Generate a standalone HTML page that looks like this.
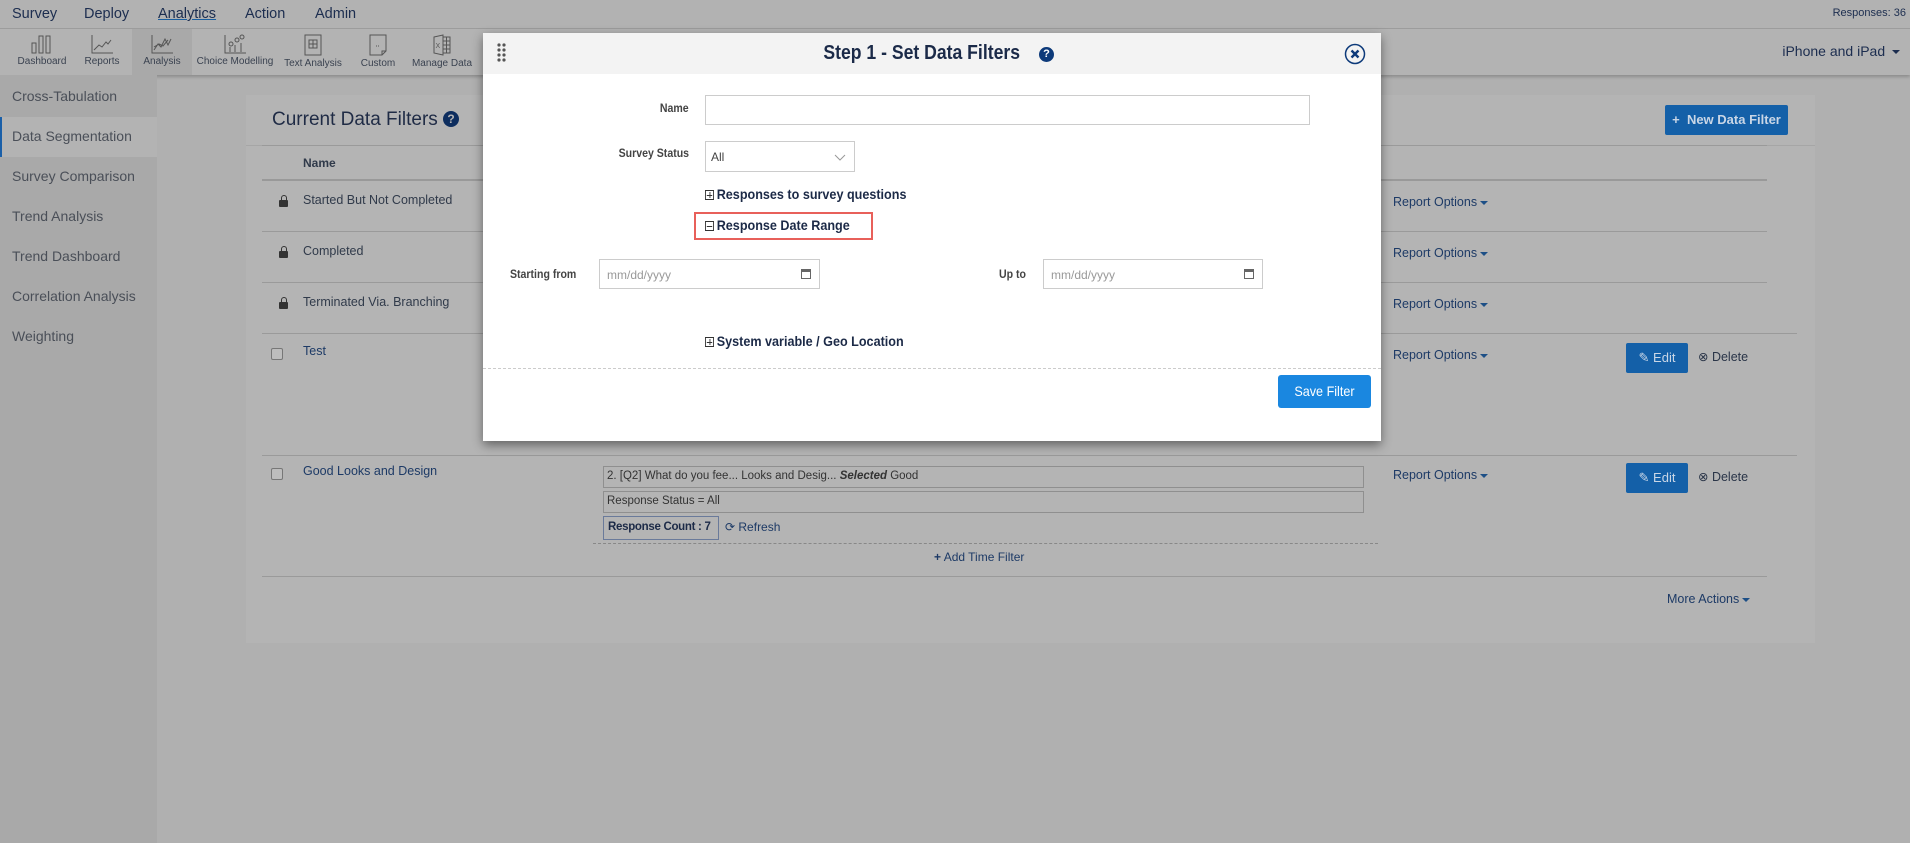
<!DOCTYPE html>
<html><head><meta charset="utf-8"><style>
*{box-sizing:border-box;margin:0;padding:0}
body{width:1910px;height:843px;position:relative;overflow:hidden;background:#b0b0b0;font-family:"Liberation Sans",sans-serif;color:#2a3548}
.a{position:absolute;white-space:nowrap}
.nav{left:0;top:0;width:1910px;height:29px;background:#b2b2b2;border-bottom:1px solid #9d9d9d}
.nav span{position:absolute;top:6px;font-size:14.5px;color:#1c2d4f}
.tb{left:0;top:29px;width:1910px;height:46px;background:#b3b3b3;box-shadow:0 2px 3px rgba(0,0,0,.2)}
.ti{position:absolute;top:0;height:46px;text-align:center;font-size:10px;color:#3a4250}
.ti svg{display:block;margin:5px auto 2px}
.sb{left:0;top:75px;width:157px;height:768px;background:#a9a9a9}
.si{position:absolute;left:0;width:157px;height:40px;font-size:14px;color:#4a4f58;padding:11px 0 0 12px}
.panel{left:246px;top:95px;width:1569px;height:548px;background:#b4b4b4}
.row{position:absolute;left:16px;width:1505px;border-top:1px solid #9a9a9a}
.nm{position:absolute;left:41px;font-size:12.5px;color:#303a4a}
.ro{position:absolute;left:1131px;font-size:12.5px;color:#1d3a66}
.caret{display:inline-block;border-left:4px solid transparent;border-right:4px solid transparent;border-top:4px solid #1d4f86;vertical-align:middle;margin-left:3px}
.lock{position:absolute;left:17px;width:9px;height:7px;background:#333;border-radius:1px}
.lock:before{content:"";position:absolute;left:1.5px;top:-5px;width:6px;height:6px;border:1.5px solid #333;border-bottom:none;border-radius:3px 3px 0 0;box-sizing:border-box}
.cb{position:absolute;left:9px;width:12px;height:12px;border:1px solid #777;border-radius:2px;background:#bdbdbd}
.btn{position:absolute;background:#1460a8;color:#c9d6e6;border-radius:2px;font-size:13px;text-align:center}
.modal{left:483px;top:33px;width:898px;height:408px;background:#fff;box-shadow:0 4px 10px rgba(0,0,0,.45)}
.mh{position:absolute;left:0;top:0;width:898px;height:41px;background:#f3f3f3}
.lbl{position:absolute;font-size:12px;font-weight:bold;color:#444;transform-origin:right center}
.inp{position:absolute;border:1px solid #ccc;background:#fff;font-size:12px;color:#999}
.sec{position:absolute;font-size:14px;font-weight:bold;color:#1c2a47;transform:scaleX(.9);transform-origin:left center}
.pm{display:inline-block;width:10px;height:10px;border:1px solid #333;vertical-align:-1px;margin-right:3px;position:relative}
.pm:before{content:"";position:absolute;left:1px;right:1px;top:3.5px;height:1px;background:#333}
.pm.p:after{content:"";position:absolute;top:1px;bottom:1px;left:3.5px;width:1px;background:#333}
.cal{position:absolute;right:8px;top:9px;width:10px;height:10px;border:1.5px solid #666;border-top-width:3px}
</style></head><body>
<div class="a nav">
<span style="left:12px">Survey</span><span style="left:84px">Deploy</span>
<span style="left:158px;text-decoration:underline;text-decoration-color:#1a5fa0">Analytics</span>
<span style="left:245px">Action</span><span style="left:315px">Admin</span>
<span style="left:auto;right:4px;top:7px;font-size:11px">Responses: 36</span>
</div>
<div class="a tb">
<div class="ti" style="left:10px;width:64px"><svg width="26" height="20" viewBox="0 0 26 20" fill="none" stroke="#555"><rect x="3" y="9" width="4" height="10"/><rect x="10" y="2" width="4" height="17"/><rect x="17" y="2" width="4" height="17"/></svg>Dashboard</div>
<div class="ti" style="left:76px;width:52px"><svg width="26" height="20" viewBox="0 0 26 20" fill="none" stroke="#555"><path d="M3 1v18h21M5 16l5-5 3 2 4-5 2 2 3-4"/></svg>Reports</div>
<div class="ti" style="left:132px;width:60px;background:#a9a9a9"><svg width="26" height="20" viewBox="0 0 26 20" fill="none" stroke="#555"><path d="M3 1v18h21M5 16l4-6 3 3 4-8 3 6 3-6M5 13l5-3 4 2 5-6"/></svg>Analysis</div>
<div class="ti" style="left:195px;width:80px"><svg width="26" height="20" viewBox="0 0 26 20" fill="none" stroke="#555"><path d="M3 1v18h21M8 18v-5M13 18v-7M19 18v-9"/><circle cx="9" cy="10" r="2"/><circle cx="15" cy="6" r="2"/><circle cx="20" cy="3" r="2"/></svg>Choice Modelling</div>
<div class="ti" style="left:280px;width:66px"><svg width="26" height="22" viewBox="0 0 26 22" fill="none" stroke="#555"><rect x="5" y="1" width="16" height="20"/><rect x="9" y="6" width="8" height="8"/><path d="M13 6v8M9 10h8"/></svg>Text Analysis</div>
<div class="ti" style="left:354px;width:48px"><svg width="26" height="22" viewBox="0 0 26 22" fill="none" stroke="#555"><path d="M5 1h16v16l-4 4H5z M17 21v-4h4"/><path d="M11 12h3" stroke-dasharray="1 1"/></svg>Custom</div>
<div class="ti" style="left:410px;width:64px"><svg width="26" height="22" viewBox="0 0 26 22" fill="none" stroke="#555"><path d="M5 3l9-2v20l-9-2z"/><rect x="14" y="3" width="7" height="16"/><path d="M14 7h7M14 11h7M14 15h7M17.5 3v16"/><text x="6.5" y="14" font-size="7" fill="#555" stroke="none" font-family="Liberation Sans">X</text></svg>Manage Data</div>
<span class="a" style="right:10px;top:14px;font-size:14px;color:#1c2d4f">iPhone and iPad <span class="caret" style="border-top-color:#1c2d4f"></span></span>
</div>
<div class="a sb">
<div class="si" style="top:2px">Cross-Tabulation</div>
<div class="si" style="top:42px;background:#b3b3b3;border-left:2px solid #1a5fa8;padding-left:10px">Data Segmentation</div>
<div class="si" style="top:82px">Survey Comparison</div>
<div class="si" style="top:122px">Trend Analysis</div>
<div class="si" style="top:162px">Trend Dashboard</div>
<div class="si" style="top:202px">Correlation Analysis</div>
<div class="si" style="top:242px">Weighting</div>
</div>
<div class="a panel">
<div class="a" style="left:26px;top:14px;font-size:19px;color:#1f2b45">Current Data Filters <span style="display:inline-block;width:16px;height:16px;border-radius:50%;background:#0d2d5e;color:#b4b4b4;font-size:12px;font-weight:bold;text-align:center;line-height:16px;vertical-align:2px">?</span></div>
<div class="btn" style="left:1419px;top:10px;width:123px;height:30px;line-height:30px;font-weight:bold">+&nbsp; New Data Filter</div>
<div class="a" style="left:0;top:50px;width:1569px;border-top:1px solid #a6a6a6"></div>
<div class="row" style="top:50px;height:35px;border-top-color:#9a9a9a"><div class="nm" style="top:10px;font-weight:bold;font-size:12px">Name</div></div>
<div class="row" style="top:84px;border-top:2px solid #999;height:52px"><div class="lock" style="top:19px"></div><div class="nm" style="top:12px">Started But Not Completed</div><div class="ro" style="top:14px">Report Options<span class="caret"></span></div></div>
<div class="row" style="top:136px;height:51px"><div class="lock" style="top:19px"></div><div class="nm" style="top:12px">Completed</div><div class="ro" style="top:14px">Report Options<span class="caret"></span></div></div>
<div class="row" style="top:187px;height:51px"><div class="lock" style="top:19px"></div><div class="nm" style="top:12px">Terminated Via. Branching</div><div class="ro" style="top:14px">Report Options<span class="caret"></span></div></div>
<div class="row" style="top:238px;height:122px;width:1535px"><div class="cb" style="top:14px"></div><div class="nm" style="top:10px;color:#1d3a66">Test</div><div class="ro" style="top:14px">Report Options<span class="caret"></span></div>
<div class="btn" style="left:1364px;top:9px;width:62px;height:30px;line-height:30px">✎ Edit</div><div class="a" style="left:1436px;top:15px;font-size:12.5px;color:#2a3548">⊗ Delete</div></div>
<div class="row" style="top:360px;height:122px;width:1535px"><div class="cb" style="top:12px"></div><div class="nm" style="top:8px;color:#1d3a66">Good Looks and Design</div><div class="ro" style="top:12px">Report Options<span class="caret"></span></div>
<div class="btn" style="left:1364px;top:7px;width:62px;height:30px;line-height:30px">✎ Edit</div><div class="a" style="left:1436px;top:13px;font-size:12.5px;color:#2a3548">⊗ Delete</div>
<div class="a" style="left:341px;top:10px;width:761px;height:22px;border:1px solid #8f8f8f;font-size:11.5px;padding:3px 3px;color:#333">2. [Q2] What do you fee... Looks and Desig... <b><i>Selected</i></b> Good</div>
<div class="a" style="left:341px;top:35px;width:761px;height:22px;border:1px solid #8f8f8f;font-size:11.5px;padding:3px 3px;color:#333">Response Status = All</div>
<div class="a" style="left:341px;top:60px;width:116px;height:24px;border:1px solid #6a7a9a;font-size:11.5px;font-weight:bold;padding:4px 4px;color:#1c2a47;letter-spacing:-.3px">Response Count : 7</div>
<div class="a" style="left:463px;top:64px;font-size:12px;color:#1d3a66">⟳ Refresh</div>
<div class="a" style="left:331px;top:87px;width:785px;border-top:1px dashed #888"></div>
<div class="a" style="left:672px;top:94px;font-size:12px;color:#1d3a66"><b>+</b> Add Time Filter</div></div>
<div class="row" style="top:481px;width:1505px;height:1px"></div>
<div class="a" style="left:1421px;top:497px;font-size:12.5px;color:#1d3a66">More Actions<span class="caret"></span></div>
</div>
<div class="a modal">
<div class="mh">
<svg class="a" style="left:14px;top:10px" width="10" height="20" viewBox="0 0 10 20" fill="#555"><circle cx="2" cy="2" r="1.6"/><circle cx="7" cy="2" r="1.6"/><circle cx="2" cy="7" r="1.6"/><circle cx="7" cy="7" r="1.6"/><circle cx="2" cy="12" r="1.6"/><circle cx="7" cy="12" r="1.6"/><circle cx="2" cy="17" r="1.6"/><circle cx="7" cy="17" r="1.6"/></svg>
<div class="a" style="left:0;width:898px;top:9px;text-align:center;font-size:20px;font-weight:bold;color:#1b2a48"><span style="display:inline-block;transform:scaleX(.88)">Step 1 - Set Data Filters</span> <span style="display:inline-block;width:15px;height:15px;border-radius:50%;background:#0d3a7a;color:#fff;font-size:11px;text-align:center;line-height:15px;vertical-align:2px">?</span></div>
<svg class="a" style="left:861px;top:10px" width="22" height="22" viewBox="0 0 22 22"><circle cx="11" cy="11" r="9.5" fill="none" stroke="#0d3a7a" stroke-width="1.5"/><path d="M7.5 7.5l7 7M14.5 7.5l-7 7" stroke="#0d3a7a" stroke-width="2.4"/></svg>
</div>
<div class="lbl" style="right:692px;top:68px;transform:scaleX(.88)">Name</div>
<div class="inp" style="left:222px;top:62px;width:605px;height:30px"></div>
<div class="lbl" style="right:692px;top:113px;transform:scaleX(.88)">Survey Status</div>
<div class="inp" style="left:222px;top:108px;width:150px;height:31px;color:#444;padding:8px 5px">All<svg class="a" style="left:128px;top:12px" width="12" height="8" viewBox="0 0 12 8"><path d="M1 1l5 5 5-5" fill="none" stroke="#999"/></svg></div>
<div class="sec" style="left:222px;top:153px"><span class="pm p"></span>Responses to survey questions</div>
<div class="a" style="left:211px;top:179px;width:179px;height:28px;border:2px solid #e8605a"></div>
<div class="sec" style="left:222px;top:184px"><span class="pm"></span>Response Date Range</div>
<div class="lbl" style="left:27px;top:234px;transform:scaleX(.88);transform-origin:left center">Starting from</div>
<div class="inp" style="left:116px;top:226px;width:221px;height:30px;padding:8px 7px">mm/dd/yyyy<div class="cal"></div></div>
<div class="lbl" style="left:516px;top:234px;transform:scaleX(.88);transform-origin:left center">Up to</div>
<div class="inp" style="left:560px;top:226px;width:220px;height:30px;padding:8px 7px">mm/dd/yyyy<div class="cal"></div></div>
<div class="sec" style="left:222px;top:300px"><span class="pm p"></span>System variable / Geo Location</div>
<div class="a" style="left:0;top:335px;width:898px;border-top:1px dashed #ccc"></div>
<div class="a" style="left:795px;top:342px;width:93px;height:33px;background:#1a87e0;border-radius:3px;color:#fff;font-size:14px;text-align:center;line-height:33px"><span style="display:inline-block;transform:scaleX(.9)">Save Filter</span></div>
</div>
</body></html>
